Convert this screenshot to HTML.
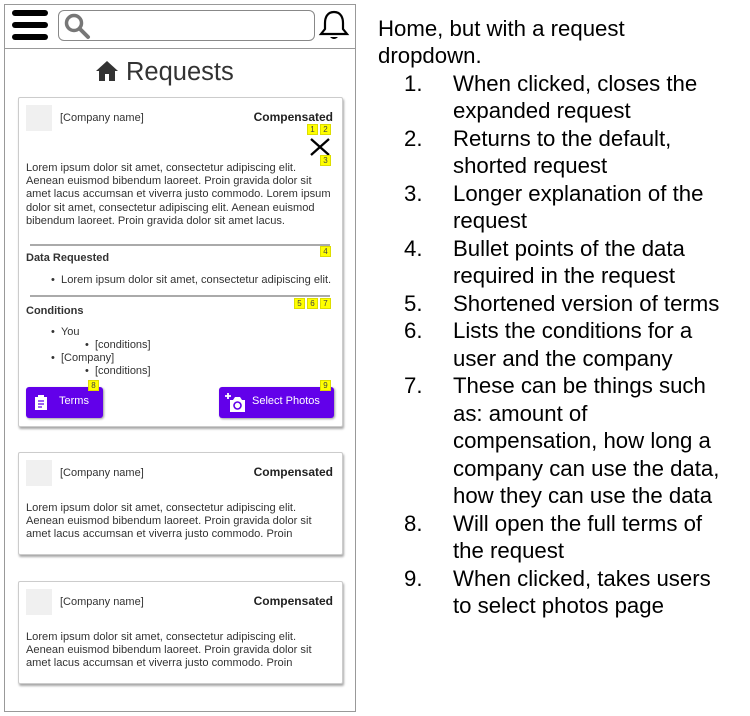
<!DOCTYPE html>
<html><head><style>
*{margin:0;padding:0;box-sizing:border-box}
body{width:750px;height:716px;background:#fff;position:relative;font-family:"Liberation Sans",Arial,sans-serif;overflow:hidden}
.a{position:absolute}
.frame{left:4px;top:4px;width:352px;height:708px;border:1px solid #999}
.card{position:absolute;left:18px;width:325px;background:#fff;border:1px solid #ccc;border-radius:2px;box-shadow:1px 2px 2px rgba(0,0,0,.35)}
.logo{position:absolute;left:7px;top:7px;width:26px;height:26px;background:#f0f0f0}
.cn{position:absolute;left:41px;top:14px;font-size:11px;color:#333}
.comp{position:absolute;right:9px;top:12px;font-size:12px;font-weight:bold;color:#222}
.p{position:absolute;left:7px;font-size:11.1px;line-height:13.2px;color:#333;white-space:nowrap}
.b{position:absolute;width:11px;height:11px;background:#ff0;border:1px solid #dd0;font-size:8px;line-height:10px;text-align:center;color:#444}
.rt{position:absolute;font-size:22.2px;color:#000;line-height:27px;white-space:nowrap}
.btn{position:absolute;top:289px;height:31px;background:#6200ea;border-radius:3px;color:#fff;font-size:11px;box-shadow:1px 1px 2px rgba(0,0,0,.4)}
</style></head><body>
<div class="a frame"></div>
<div class="a" style="left:4px;top:48px;width:352px;height:1px;background:#999"></div>
<div class="a" style="left:12px;top:10px;width:36px;height:6px;background:#000;border-radius:3px"></div>
<div class="a" style="left:12px;top:22px;width:36px;height:6px;background:#000;border-radius:3px"></div>
<div class="a" style="left:12px;top:34px;width:36px;height:6px;background:#000;border-radius:3px"></div>
<div class="a" style="left:58px;top:10px;width:257px;height:31px;border:1px solid #888;border-radius:6px"></div>
<svg class="a" style="left:63px;top:12px" width="30" height="28" viewBox="0 0 30 28"><circle cx="11" cy="11" r="7.5" fill="none" stroke="#777" stroke-width="3.5"/><line x1="16.5" y1="16.5" x2="25" y2="25" stroke="#777" stroke-width="4" stroke-linecap="round"/></svg>
<svg class="a" style="left:318px;top:9px" width="32" height="33" viewBox="0 0 32 33"><path d="M16 3 C9 3 7 9 7 14 L7 20 L3 25 L29 25 L25 20 L25 14 C25 9 23 3 16 3 Z" fill="none" stroke="#000" stroke-width="2.2"/><path d="M12 28 Q16 32 20 28 Z" fill="#000"/></svg>
<svg class="a" style="left:95px;top:60px" width="24" height="22" viewBox="0 0 24 22"><path d="M12 1 L1 11 L4 11 L4 21 L10 21 L10 14 L14 14 L14 21 L20 21 L20 11 L23 11 Z" fill="#333"/></svg>
<div class="a" style="left:126px;top:58px;font-size:25.5px;color:#333">Requests</div>

<div class="card" style="top:97px;height:330px">
 <div class="logo"></div><div class="cn">[Company name]</div><div class="comp">Compensated</div>
 <div class="b" style="left:288px;top:26px">1</div><div class="b" style="left:301px;top:26px">2</div>
 <svg class="a" style="left:290px;top:39px" width="22" height="20"><path d="M2 2 L20 18 M20 2 L2 18" stroke="#000" stroke-width="2.3"/></svg>
 <div class="b" style="left:301px;top:57px">3</div>
 <div class="p" style="top:64px">Lorem ipsum dolor sit amet, consectetur adipiscing elit.<br>Aenean euismod bibendum laoreet. Proin gravida dolor sit<br>amet lacus accumsan et viverra justo commodo. Lorem ipsum<br>dolor sit amet, consectetur adipiscing elit. Aenean euismod<br>bibendum laoreet. Proin gravida dolor sit amet lacus.</div>
 <div class="a" style="left:11px;top:146px;width:300px;height:2px;background:#aaa"></div>
 <div class="b" style="left:301px;top:148px">4</div>
 <div class="a" style="left:7px;top:154px;font-size:11px;font-weight:bold;color:#333">Data Requested</div>
 <div class="a" style="left:32px;top:176px;font-size:11.1px;color:#333;white-space:nowrap">• &nbsp;Lorem ipsum dolor sit amet, consectetur adipiscing elit.</div>
 <div class="a" style="left:11px;top:197px;width:300px;height:2px;background:#aaa"></div>
 <div class="b" style="left:275px;top:200px">5</div><div class="b" style="left:288px;top:200px">6</div><div class="b" style="left:301px;top:200px">7</div>
 <div class="a" style="left:7px;top:207px;font-size:11px;font-weight:bold;color:#333">Conditions</div>
 <div class="a" style="left:32px;top:228px;font-size:11px;color:#333;line-height:13px">• &nbsp;You<br><span style="padding-left:34px">• &nbsp;[conditions]</span><br>• &nbsp;[Company]<br><span style="padding-left:34px">• &nbsp;[conditions]</span></div>
 <div class="btn" style="left:7px;width:77px"><svg class="a" style="left:8px;top:7px" width="14" height="17" viewBox="0 0 14 17"><path d="M1 3 H4 V1 H10 V3 H13 V16 H1 Z" fill="#fff"/><path d="M4 7 H10 M4 10 H10 M4 13 H8" stroke="#6200ea" stroke-width="1.3"/></svg><span class="a" style="left:33px;top:8px">Terms</span></div>
 <div class="b" style="left:69px;top:282px">8</div>
 <div class="btn" style="left:200px;width:115px"><svg class="a" style="left:6px;top:5px" width="22" height="21" viewBox="0 0 22 21"><path d="M3 1 V7 M0 4 H6" stroke="#fff" stroke-width="1.8"/><path d="M5 8 H8 L10 5 H15 L17 8 H20 V20 H5 Z" fill="#fff"/><circle cx="12.5" cy="13.5" r="3.5" fill="none" stroke="#6200ea" stroke-width="1.6"/></svg><span class="a" style="left:33px;top:8px">Select Photos</span></div>
 <div class="b" style="left:301px;top:282px">9</div>
</div>

<div class="card" style="top:452px;height:103px">
 <div class="logo"></div><div class="cn">[Company name]</div><div class="comp">Compensated</div>
 <div class="p" style="top:49px">Lorem ipsum dolor sit amet, consectetur adipiscing elit.<br>Aenean euismod bibendum laoreet. Proin gravida dolor sit<br>amet lacus accumsan et viverra justo commodo. Proin</div>
</div>
<div class="card" style="top:581px;height:103px">
 <div class="logo"></div><div class="cn">[Company name]</div><div class="comp">Compensated</div>
 <div class="p" style="top:49px">Lorem ipsum dolor sit amet, consectetur adipiscing elit.<br>Aenean euismod bibendum laoreet. Proin gravida dolor sit<br>amet lacus accumsan et viverra justo commodo. Proin</div>
</div>

<div class="rt" style="left:378px;top:15px">Home, but with a request</div>
<div class="rt" style="left:378px;top:42px">dropdown.</div>
<div class="rt" style="left:404px;top:70px">1.</div><div class="rt" style="left:453px;top:70px">When clicked, closes the</div>
<div class="rt" style="left:453px;top:97px">expanded request</div>
<div class="rt" style="left:404px;top:125px">2.</div><div class="rt" style="left:453px;top:125px">Returns to the default,</div>
<div class="rt" style="left:453px;top:152px">shorted request</div>
<div class="rt" style="left:404px;top:180px">3.</div><div class="rt" style="left:453px;top:180px">Longer explanation of the</div>
<div class="rt" style="left:453px;top:207px">request</div>
<div class="rt" style="left:404px;top:235px">4.</div><div class="rt" style="left:453px;top:235px">Bullet points of the data</div>
<div class="rt" style="left:453px;top:262px">required in the request</div>
<div class="rt" style="left:404px;top:290px">5.</div><div class="rt" style="left:453px;top:290px">Shortened version of terms</div>
<div class="rt" style="left:404px;top:317px">6.</div><div class="rt" style="left:453px;top:317px">Lists the conditions for a</div>
<div class="rt" style="left:453px;top:345px">user and the company</div>
<div class="rt" style="left:404px;top:372px">7.</div><div class="rt" style="left:453px;top:372px">These can be things such</div>
<div class="rt" style="left:453px;top:400px">as: amount of</div>
<div class="rt" style="left:453px;top:427px">compensation, how long a</div>
<div class="rt" style="left:453px;top:455px">company can use the data,</div>
<div class="rt" style="left:453px;top:482px">how they can use the data</div>
<div class="rt" style="left:404px;top:510px">8.</div><div class="rt" style="left:453px;top:510px">Will open the full terms of</div>
<div class="rt" style="left:453px;top:537px">the request</div>
<div class="rt" style="left:404px;top:565px">9.</div><div class="rt" style="left:453px;top:565px">When clicked, takes users</div>
<div class="rt" style="left:453px;top:592px">to select photos page</div>
</body></html>
